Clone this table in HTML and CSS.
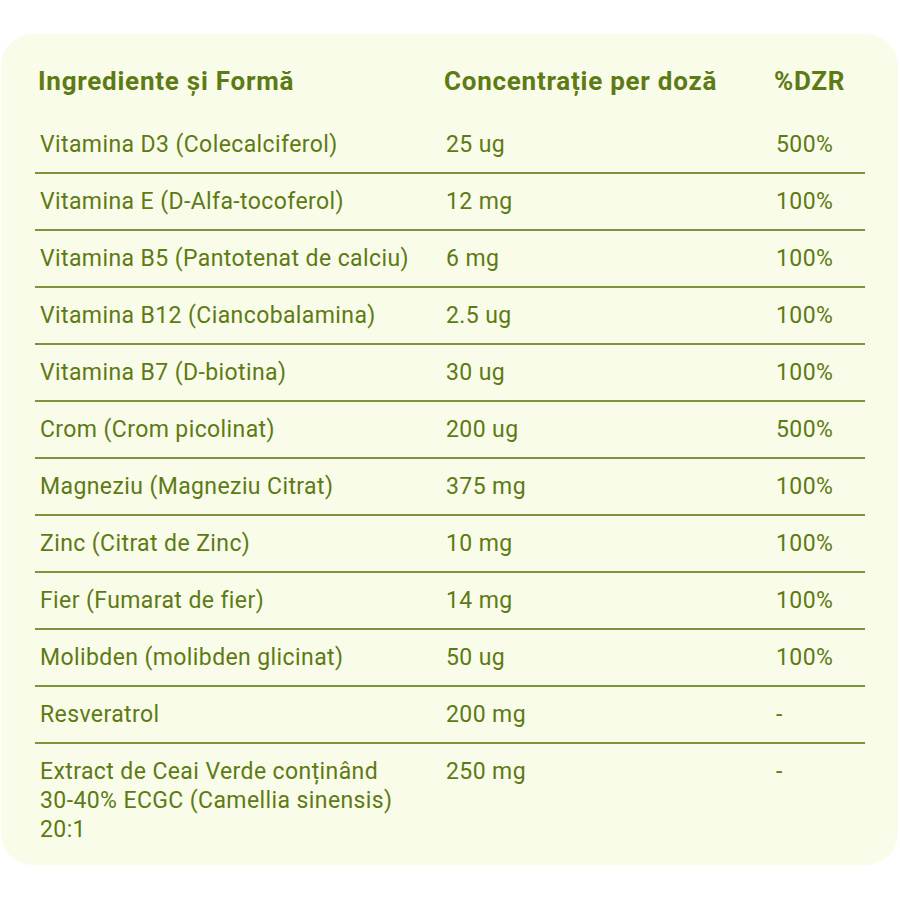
FILE: index.html
```html
<!DOCTYPE html>
<html lang="ro">
<head>
<meta charset="utf-8">
<title>Ingrediente</title>
<link rel="stylesheet" href="styles.css">
</head>
<body>
<div class="card">
  <div class="row head">
    <div class="cell">Ingrediente și Formă</div>
    <div class="cell">Concentrație per doză</div>
    <div class="cell">%DZR</div>
  </div>
  <div class="row"><div class="cell">Vitamina D3 (Colecalciferol)</div><div class="cell">25 ug</div><div class="cell">500%</div></div>
  <div class="row"><div class="cell">Vitamina E (D-Alfa-tocoferol)</div><div class="cell">12 mg</div><div class="cell">100%</div></div>
  <div class="row"><div class="cell">Vitamina B5 (Pantotenat de calciu)</div><div class="cell">6 mg</div><div class="cell">100%</div></div>
  <div class="row"><div class="cell">Vitamina B12 (Ciancobalamina)</div><div class="cell">2.5 ug</div><div class="cell">100%</div></div>
  <div class="row"><div class="cell">Vitamina B7 (D-biotina)</div><div class="cell">30 ug</div><div class="cell">100%</div></div>
  <div class="row"><div class="cell">Crom (Crom picolinat)</div><div class="cell">200 ug</div><div class="cell">500%</div></div>
  <div class="row"><div class="cell">Magneziu (Magneziu Citrat)</div><div class="cell">375 mg</div><div class="cell">100%</div></div>
  <div class="row"><div class="cell">Zinc (Citrat de Zinc)</div><div class="cell">10 mg</div><div class="cell">100%</div></div>
  <div class="row"><div class="cell">Fier (Fumarat de fier)</div><div class="cell">14 mg</div><div class="cell">100%</div></div>
  <div class="row"><div class="cell">Molibden (molibden glicinat)</div><div class="cell">50 ug</div><div class="cell">100%</div></div>
  <div class="row"><div class="cell">Resveratrol</div><div class="cell">200 mg</div><div class="cell">-</div></div>
  <div class="row last"><div class="cell">Extract de Ceai Verde conținând 30-40% ECGC (Camellia sinensis) 20:1</div><div class="cell">250 mg</div><div class="cell">-</div></div>
</div>
</body>
</html>
```
FILE: styles.css
```css
html, body {
  margin: 0;
  padding: 0;
  background: #ffffff;
}
body {
  font-family: Roboto, "Liberation Sans", sans-serif;
  color: #5e7a14;
}
.card {
  margin: 34px 2px 0 1px;
  height: 831px;
  box-sizing: border-box;
  background: #f8fce9;
  border-radius: 32px;
  padding: 32px 35px 8px 34px;
}
.row {
  display: grid;
  grid-template-columns: 406px 330px 94px;
  border-bottom: 2px solid #7e943c;
  width: 830px;
}
.cell {
  padding: 13px 5px;
  font-size: 23px;
  font-weight: 400;
  letter-spacing: 0.4px;
  line-height: 29px;
}
.head {
  border-bottom: none;
  padding-bottom: 21px;
}
.head .cell {
  padding: 0 3px;
  font-size: 26px;
  line-height: 30px;
  font-weight: 700;
  letter-spacing: 0.75px;
}
.last {
  border-bottom: none;
}
.last .cell:first-child {
  padding-right: 31px;
}
```
